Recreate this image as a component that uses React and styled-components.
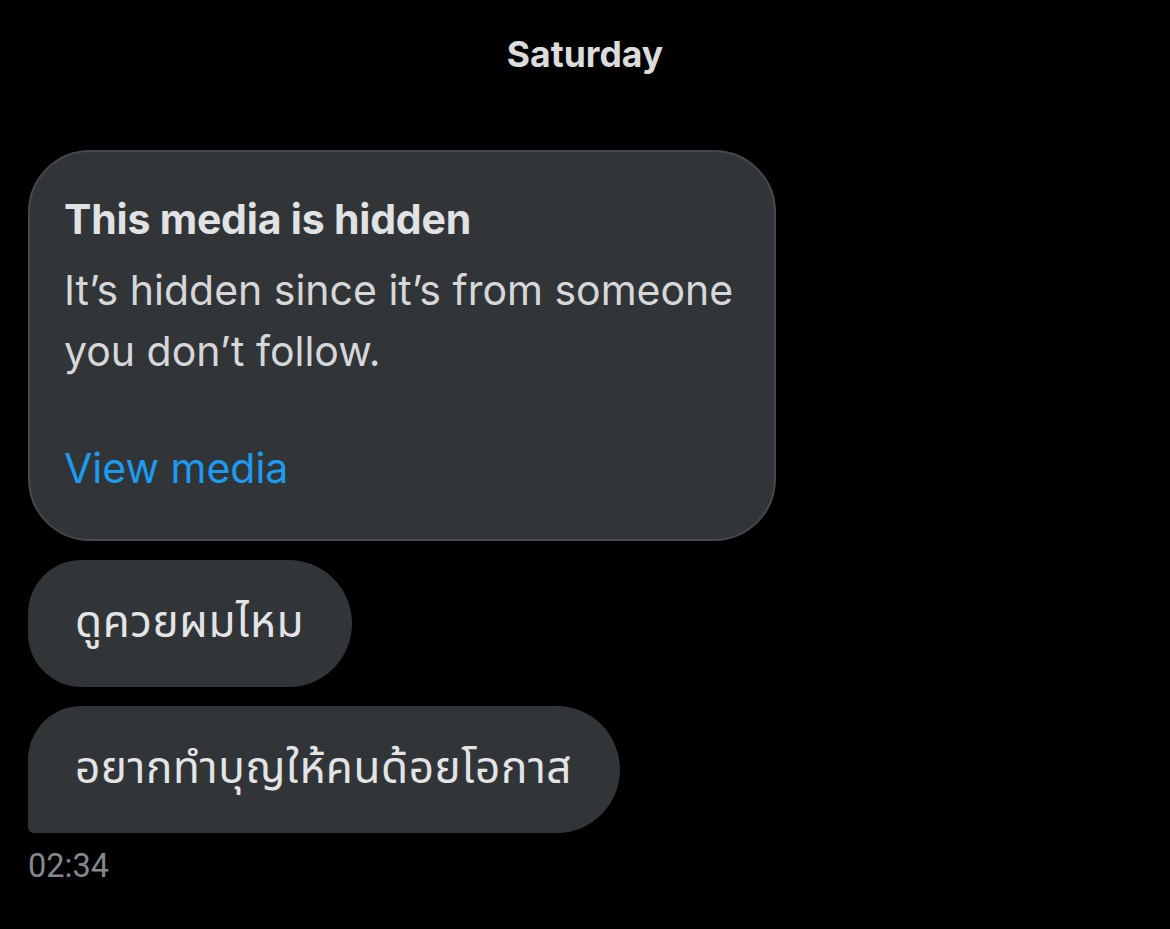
import React from 'react';
import styled, { createGlobalStyle } from 'styled-components';

const GlobalStyle = createGlobalStyle`
	html, body {
		margin: 0;
		padding: 0;
		background: #000;
	}
	body {
		font-family: Inter, "Noto Sans", "DejaVu Sans", sans-serif;
		-webkit-font-smoothing: antialiased;
	}
`;

const Screen = styled.div`
	width: 1170px;
	height: 929px;
	background: #000;
	display: flex;
	flex-direction: column;
	padding: 34px 28px 0;
	box-sizing: border-box;
	color: #e2e3e5;
`;

const DayLabel = styled.div`
	align-self: center;
	font-size: 35.5px;
	font-weight: 700;
	line-height: 42px;
	color: #dcdcdd;
	margin-bottom: 74px;
`;

const Thread = styled.div`
	display: flex;
	flex-direction: column;
	align-items: flex-start;
	gap: 19px;
`;

const HiddenCard = styled.div`
	width: 748px;
	box-sizing: border-box;
	background: #323538;
	border: 2px solid #45484c;
	border-radius: 62px;
	padding: 42px 34px 40px;
	display: flex;
	flex-direction: column;
`;

const CardTitle = styled.div`
	font-size: 41px;
	font-weight: 700;
	line-height: 50px;
	color: #e1e2e3;
	letter-spacing: -0.2px;
`;

const CardBody = styled.div`
	font-size: 41px;
	line-height: 61px;
	color: #d6d7d9;
	margin-top: 16px;
	width: 690px;
`;

const ViewLink = styled.a`
	margin-top: 56px;
	font-size: 41px;
	line-height: 61px;
	color: #1d9bf0;
	text-decoration: none;
`;

const Bubble = styled.div`
	background: #323538;
	height: 127px;
	box-sizing: border-box;
	padding: 0 48px 0 47px;
	display: flex;
	align-items: center;
	border-radius: ${p => (p.$last ? '54px 64px 64px 6px' : '54px 64px 64px 54px')};
	font-family: "Noto Sans Thai", "Noto Sans", "DejaVu Sans", sans-serif;
	font-size: 44px;
	letter-spacing: 0.6px;
	color: #e3e4e6;
`;

const Time = styled.div`
	margin-top: 14px;
	font-family: Roboto, "Liberation Sans", sans-serif;
	font-size: 32.5px;
	color: #85888c;
`;

export default function App() {
	return (
		<>
			<GlobalStyle />
			<Screen>
				<DayLabel>Saturday</DayLabel>
				<Thread>
					<HiddenCard>
						<CardTitle>This media is hidden</CardTitle>
						<CardBody>It’s hidden since it’s from someone you don’t follow.</CardBody>
						<ViewLink href="#">View media</ViewLink>
					</HiddenCard>
					<Bubble>ดูควยผมไหม</Bubble>
					<Bubble $last>อยากทำบุญให้คนด้อยโอกาส</Bubble>
				</Thread>
				<Time>02:34</Time>
			</Screen>
		</>
	);
}
